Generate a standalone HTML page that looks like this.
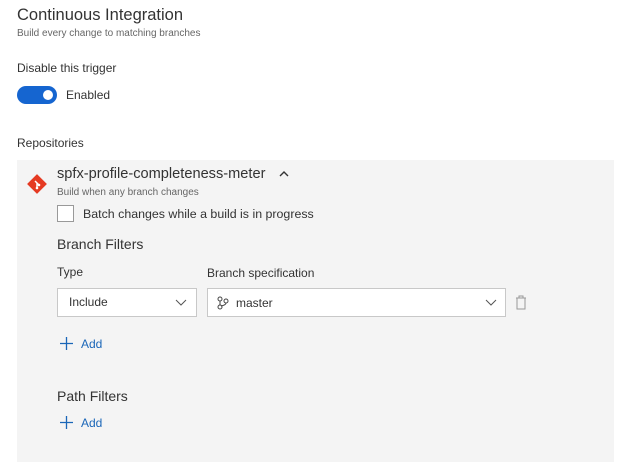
<!DOCTYPE html>
<html><head><style>
body{margin:0;width:624px;height:471px;background:#fff;font-family:"Liberation Sans",sans-serif;color:#222;position:relative;overflow:hidden}
.a{position:absolute;white-space:nowrap}
.panel{position:absolute;left:17px;top:160px;width:597px;height:302px;background:#f4f4f4}
.dd{position:absolute;background:#fff;border:1px solid #c8c8c8;box-sizing:border-box}
.blue{color:#1a66b8}
</style></head><body>
<div class="a" style="left:17px;top:6px;font-size:16.5px;color:#333">Continuous Integration</div>
<div class="a" style="left:17px;top:28px;font-size:10px;color:#666">Build every change to matching branches</div>
<div class="a" style="left:17px;top:61px;font-size:12px;color:#333">Disable this trigger</div>
<div class="a" style="left:17px;top:86px;width:40px;height:18px;border-radius:9px;background:#1565d0"></div>
<div class="a" style="left:43px;top:90px;width:10px;height:10px;border-radius:5px;background:#fff"></div>
<div class="a" style="left:66px;top:88px;font-size:12px;color:#333">Enabled</div>
<div class="a" style="left:17px;top:136px;font-size:12px;color:#333">Repositories</div>
<div class="panel"></div>
<svg class="a" style="left:26px;top:173px" width="22" height="22" viewBox="0 0 22 22"><rect x="4" y="4" width="14" height="14" transform="rotate(45 11 11)" fill="#e53a22"/><path d="M9 8 L13 12 M11 10 L11 15" stroke="#fff" stroke-width="1.5"/><circle cx="11" cy="15" r="1.3" fill="#fff"/><circle cx="13" cy="12" r="1.3" fill="#fff"/></svg>
<div class="a" style="left:57px;top:166px;font-size:14.6px;color:#333">spfx-profile-completeness-meter</div>
<svg class="a" style="left:279px;top:170px" width="10" height="7"><path d="M1 6 L5 2 L9 6" stroke="#333" stroke-width="1.4" fill="none"/></svg>
<div class="a" style="left:57px;top:187px;font-size:10px;color:#666">Build when any branch changes</div>
<div class="a" style="left:57px;top:205px;width:17px;height:17px;border:1px solid #999;box-sizing:border-box;background:#fff"></div>
<div class="a" style="left:83px;top:207px;font-size:12.4px;color:#333">Batch changes while a build is in progress</div>
<div class="a" style="left:57px;top:236px;font-size:14px;color:#333">Branch Filters</div>
<div class="a" style="left:57px;top:265px;font-size:12px;color:#333">Type</div>
<div class="a" style="left:207px;top:266px;font-size:12px;color:#333">Branch specification</div>
<div class="dd" style="left:57px;top:288px;width:140px;height:29px"></div>
<div class="a" style="left:69px;top:295px;font-size:12px;color:#333">Include</div>
<svg class="a" style="left:175px;top:299px" width="12" height="8"><path d="M1 1 L6 6 L11 1" stroke="#555" fill="none"/></svg>
<div class="dd" style="left:207px;top:288px;width:299px;height:29px"></div>
<svg class="a" style="left:217px;top:296px" width="12" height="14"><circle cx="3" cy="3" r="2" stroke="#444" fill="none"/><circle cx="3" cy="11" r="2" stroke="#444" fill="none"/><circle cx="9" cy="5" r="2" stroke="#444" fill="none"/><path d="M3 5 V9 M9 7 Q9 9 4 10" stroke="#444" fill="none"/></svg>
<div class="a" style="left:236px;top:296px;font-size:12px;color:#333">master</div>
<svg class="a" style="left:485px;top:299px" width="12" height="8"><path d="M1 1 L6 6 L11 1" stroke="#555" fill="none"/></svg>
<svg class="a" style="left:515px;top:295px" width="12" height="15"><path d="M1 3 H11 M4 3 V1 H8 V3 M2 3 V14 H10 V3" stroke="#999" fill="none"/></svg>
<svg class="a" style="left:59px;top:336px" width="15" height="15"><path d="M7.5 1 V14 M1 7.5 H14" stroke="#1a66b8" stroke-width="1.3"/></svg>
<div class="a blue" style="left:81px;top:337px;font-size:12px">Add</div>
<div class="a" style="left:57px;top:388px;font-size:14px;color:#333">Path Filters</div>
<svg class="a" style="left:59px;top:415px" width="15" height="15"><path d="M7.5 1 V14 M1 7.5 H14" stroke="#1a66b8" stroke-width="1.3"/></svg>
<div class="a blue" style="left:81px;top:416px;font-size:12px">Add</div>
</body></html>
